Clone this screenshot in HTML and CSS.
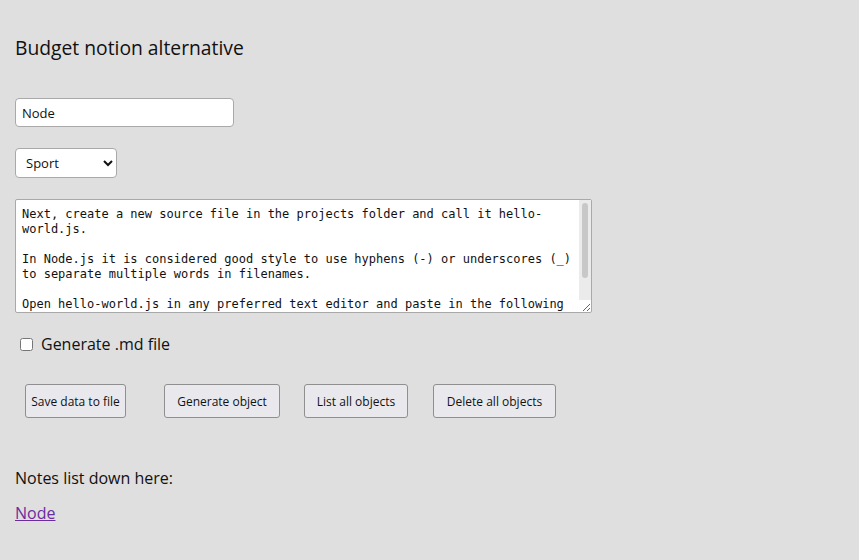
FILE: index.html
```html
<!DOCTYPE html>
<html>
<head>
<meta charset="utf-8">
<link rel="stylesheet" href="styles.css">
</head>
<body>
<main class="page">
  <h1 class="title">Budget notion alternative</h1>
  <input class="name-input" type="text" value="Node">
  <div class="select-wrap">
    <select class="category">
      <option>Sport</option>
    </select>
  </div>
  <div class="area-wrap">
    <textarea class="content" spellcheck="false">Next, create a new source file in the projects folder and call it hello-world.js.

In Node.js it is considered good style to use hyphens (-) or underscores (_) to separate multiple words in filenames.

Open hello-world.js in any preferred text editor and paste in the following content:

const http = require('http');
const hostname = '127.0.0.1';
const port = 3000;</textarea>
    <div class="fake-scroll"><div class="fake-thumb"></div></div>
  </div>
  <label class="check-row"><input type="checkbox" class="check"><span>Generate .md file</span></label>
  <div class="buttons">
    <button class="btn b1">Save data to file</button>
    <button class="btn b2">Generate object</button>
    <button class="btn b3">List all objects</button>
    <button class="btn b4">Delete all objects</button>
  </div>
  <p class="notes">Notes list down here:</p>
  <a class="note-link" href="#">Node</a>
</main>
</body>
</html>
```

FILE: styles.css
```css
html, body {
  margin: 0;
  padding: 0;
  background: #dfdfdf;
}
.page {
  padding: 0 15px;
  font-family: "Open Sans", "DejaVu Sans", sans-serif;
  color: #111;
  display: flex;
  flex-direction: column;
  align-items: flex-start;
}
.title {
  font-weight: 400;
  font-size: 19.3px;
  margin: 36px 0 0 0;
  line-height: 24px;
  height: 24px;
}
.name-input {
  margin-top: 38px;
  box-sizing: border-box;
  width: 219px;
  height: 29px;
  border: 1px solid #a9a9a9;
  border-radius: 4px;
  background: #fff;
  padding: 0 6px;
  font-family: "Open Sans", sans-serif;
  font-size: 13px;
  font-weight: 500;
  color: #111;
}
.select-wrap {
  margin-top: 21px;
}
.category {
  box-sizing: border-box;
  width: 102px;
  height: 30px;
  border: 1px solid #a9a9a9;
  border-radius: 4px;
  background: #fff;
  padding: 0 6px;
  font-family: "Open Sans", sans-serif;
  font-size: 13px;
  color: #111;
}
.area-wrap {
  margin-top: 21px;
  position: relative;
  width: 577px;
  height: 114px;
}
.content {
  display: block;
  box-sizing: border-box;
  width: 577px;
  height: 114px;
  margin: 0;
  border: 1px solid #a9a9a9;
  border-radius: 2px;
  background: #fff;
  padding: 7px 14px 5px 6px;
  font-family: "DejaVu Sans Mono", monospace;
  font-size: 12px;
  line-height: 15px;
  color: #111;
  resize: both;
  overflow: hidden;
}
.fake-scroll {
  position: absolute;
  top: 1px;
  right: 1px;
  width: 12px;
  height: 100px;
  background: #ebebeb;
}
.fake-thumb {
  margin: 3px auto 0;
  width: 6px;
  height: 75px;
  border-radius: 3px;
  background: #c8c8c8;
}
.check-row {
  margin-top: 20px;
  display: flex;
  align-items: center;
  gap: 8px;
  font-size: 16px;
  margin-left: 5px;
}
.check {
  margin: 0;
  width: 13px;
  height: 13px;
}
.buttons {
  margin-top: 29px;
  display: flex;
  margin-left: 10px;
}
.btn {
  box-sizing: border-box;
  height: 34px;
  padding: 0 4px;
  white-space: nowrap;
  border: 1px solid #8f8f8f;
  border-radius: 3px;
  background: #e9e9ed;
  font-family: "Open Sans", sans-serif;
  font-size: 12px;
  color: #111;
}
.b1 { width: 101px; }
.b2 { width: 116px; margin-left: 38px; }
.b3 { width: 104px; margin-left: 24px; }
.b4 { width: 123px; margin-left: 25px; }
.notes {
  margin: 48px 0 0 0;
  font-size: 16px;
  line-height: 24px;
}
.note-link {
  margin-top: 11px;
  font-size: 16px;
  line-height: 24px;
  color: #6a2c9e;
}
```
